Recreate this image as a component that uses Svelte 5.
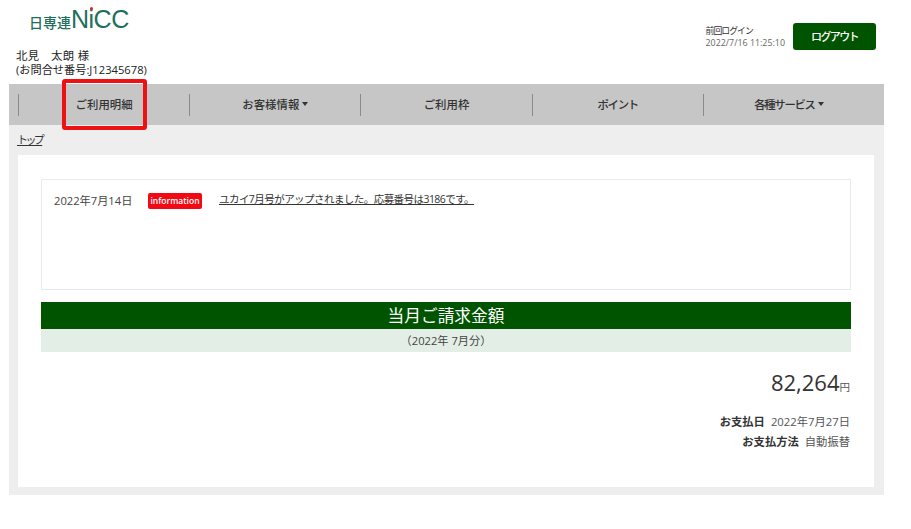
<script>
  const navItems = [
    { label: 'ご利用明細', caret: false, tight: false },
    { label: 'お客様情報', caret: true, tight: false },
    { label: 'ご利用枠', caret: false, tight: false },
    { label: 'ポイント', caret: false, tight: true },
    { label: '各種サービス', caret: true, tight: true }
  ];
</script>

<div class="page">
  <header class="header">
    <div class="left">
      <div class="logo"><span class="logo-ja">日専連</span><span class="logo-en">NiCC<span class="logo-dot"></span></span></div>
      <div class="user">
        <div class="name">北見　太朗 様</div>
        <div>(お問合せ番号:J12345678)</div>
      </div>
    </div>
    <div class="right">
      <div class="last">
        <div class="last-label">前回ログイン</div>
        <div>2022/7/16 11:25:10</div>
      </div>
      <button class="logout">ログアウト</button>
    </div>
  </header>

  <nav class="nav">
    {#each navItems as item}
      <div class="nav-item" class:tight={item.tight}>
        <span>{item.label}</span>
        {#if item.caret}<span class="caret"></span>{/if}
      </div>
    {/each}
    <div class="highlight"></div>
  </nav>

  <main class="main">
    <div class="crumb"><a href="#top">トップ</a></div>
    <section class="card">
      <div class="notice">
        <span class="date">2022年7月14日</span>
        <span class="badge">information</span>
        <a class="link" href="#news">ユカイ7月号がアップされました。応募番号は3186です。</a>
      </div>
      <div class="bill-title">当月ご請求金額</div>
      <div class="bill-month">（2022年 7月分）</div>
      <div class="amount">82,264<span class="yen">円</span></div>
      <div class="pay-row first"><b>お支払日</b><span>2022年7月27日</span></div>
      <div class="pay-row"><b>お支払方法</b><span>自動振替</span></div>
    </section>
  </main>
</div>

<style>
  :global(body) {
    margin: 0;
    background: #fff;
  }
  .page {
    width: 875px;
    margin-left: 9px;
    font-family: "Open Sans", "Noto Sans CJK JP", sans-serif;
    color: #333;
  }
  .header {
    height: 84px;
    display: flex;
    justify-content: space-between;
    box-sizing: border-box;
  }
  .left {
    padding-left: 7px;
  }
  .logo {
    display: flex;
    align-items: baseline;
    height: 49px;
    box-sizing: border-box;
    padding: 3px 0 0 13px;
    color: #1f6f5c;
    line-height: 32px;
  }
  .logo-ja {
    font-size: 14px;
    font-weight: 500;
  }
  .logo-en {
    position: relative;
    font-family: "Liberation Sans", sans-serif;
    font-size: 25px;
    letter-spacing: -0.5px;
  }
  .logo-dot {
    position: absolute;
    left: 19px;
    top: 4px;
    width: 3px;
    height: 3px;
    border-radius: 50%;
    background: #d8232a;
  }
  .user {
    font-size: 11.2px;
    line-height: 14px;
    color: #222;
  }
  .name {
    font-size: 11.4px;
    letter-spacing: 0.3px;
  }
  .right {
    display: flex;
    align-items: flex-start;
    gap: 8px;
    padding: 23px 8px 0 0;
  }
  .last {
    font-size: 8.9px;
    line-height: 12px;
    color: #666;
    padding-top: 2px;
  }
  .last-label {
    color: #333;
    letter-spacing: -1px;
  }
  .logout {
    width: 83px;
    height: 27px;
    border: 0;
    border-radius: 3px;
    background: #005400;
    color: #fff;
    font: 500 11px "Noto Sans CJK JP", sans-serif;
    letter-spacing: -1.6px;
    padding: 0 0 2px;
  }
  .nav {
    position: relative;
    height: 41px;
    background: #c6c6c6;
    display: flex;
    align-items: center;
    padding: 0 10px 0 9px;
  }
  .nav-item {
    flex: 1;
    height: 22px;
    box-sizing: border-box;
    padding-bottom: 2px;
    border-left: 1px solid #8a8a8a;
    display: flex;
    align-items: center;
    justify-content: center;
    gap: 3px;
    font-size: 11.4px;
    font-weight: 500;
    color: #333;
  }
  .nav-item.tight span:first-child {
    letter-spacing: -1.3px;
  }
  .nav-item:last-of-type {
    border-right: 1px solid #8a8a8a;
  }
  .caret {
    width: 0;
    height: 0;
    border-left: 3.5px solid transparent;
    border-right: 3.5px solid transparent;
    border-top: 4px solid #333;
  }
  .highlight {
    position: absolute;
    left: 53px;
    top: -5px;
    width: 77px;
    height: 43px;
    border: 4px solid #ee1111;
    border-radius: 3px;
  }
  .main {
    background: #eeeeee;
    height: 370px;
    padding: 0 10px 8px 9px;
    box-sizing: border-box;
    display: flex;
    flex-direction: column;
  }
  .crumb {
    height: 30px;
    font-size: 11px;
    line-height: 30px;
    letter-spacing: -2.6px;
    margin-left: -1px;
    color: #333;
  }
  .crumb a {
    color: #333;
  }
  .card {
    flex: 1;
    background: #fff;
    padding: 24px 23px 0;
  }
  .notice {
    height: 111px;
    box-sizing: border-box;
    border: 1px solid #e4ecf0;
    display: flex;
    align-items: flex-start;
    padding: 13px 12px;
    font-size: 11.2px;
    line-height: 16px;
  }
  .date {
    width: 94px;
    color: #444;
    flex: none;
  }
  .badge {
    width: 54px;
    height: 16px;
    flex: none;
    border-radius: 2px;
    background: #f10a14;
    color: #fff;
    font-size: 8.5px;
    font-weight: 600;
    line-height: 16px;
    text-align: center;
    white-space: nowrap;
    overflow: hidden;
    margin-right: 17px;
  }
  .link {
    color: #333;
    margin-top: -2px;
    white-space: nowrap;
    font-size: 10.5px;
    letter-spacing: -0.55px;
  }
  .bill-title {
    margin-top: 12px;
    height: 27px;
    background: #005400;
    color: #fff;
    text-align: center;
    font-size: 16.7px;
    line-height: 27px;
  }
  .bill-month {
    height: 23px;
    background: #e3eee6;
    text-align: center;
    font-size: 11.2px;
    line-height: 23px;
    color: #444;
  }
  .amount {
    margin-top: 14px;
    text-align: right;
    font-size: 22px;
    line-height: 32px;
    padding-right: 1px;
  }
  .yen {
    font-size: 10.5px;
    color: #555;
  }
  .pay-row {
    display: flex;
    justify-content: flex-end;
    gap: 6px;
    font-size: 11.3px;
    line-height: 20px;
    color: #555;
    padding-right: 1px;
  }
  .pay-row.first {
    margin-top: 9px;
  }
  .pay-row b {
    color: #333;
  }
</style>
